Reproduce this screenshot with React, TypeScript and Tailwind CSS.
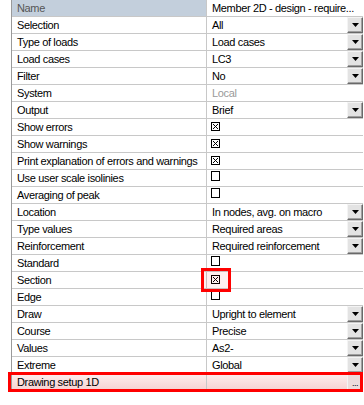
import React from "react";

type Row = {
  name: string;
  value?: string;
  kind: "combo" | "check" | "text" | "dots";
  checked?: boolean;
  muted?: boolean;
};

const rows: Row[] = [
  { name: "Selection", value: "All", kind: "combo" },
  { name: "Type of loads", value: "Load cases", kind: "combo" },
  { name: "Load cases", value: "LC3", kind: "combo" },
  { name: "Filter", value: "No", kind: "combo" },
  { name: "System", value: "Local", kind: "text", muted: true },
  { name: "Output", value: "Brief", kind: "combo" },
  { name: "Show errors", kind: "check", checked: true },
  { name: "Show warnings", kind: "check", checked: true },
  { name: "Print explanation of errors and warnings", kind: "check", checked: true },
  { name: "Use user scale isolinies", kind: "check" },
  { name: "Averaging of peak", kind: "check" },
  { name: "Location", value: "In nodes, avg. on macro", kind: "combo" },
  { name: "Type values", value: "Required areas", kind: "combo" },
  { name: "Reinforcement", value: "Required reinforcement", kind: "combo" },
  { name: "Standard", kind: "check" },
  { name: "Section", kind: "check", checked: true },
  { name: "Edge", kind: "check" },
  { name: "Draw", value: "Upright to element", kind: "combo" },
  { name: "Course", value: "Precise", kind: "combo" },
  { name: "Values", value: "As2-", kind: "combo" },
  { name: "Extreme", value: "Global", kind: "combo" },
  { name: "Drawing setup 1D", kind: "dots" },
];

function ComboButton() {
  return (
    <div className="ml-auto flex h-[16px] w-[16px] shrink-0 items-center justify-center border-t border-l border-t-[#f4f4f4] border-l-[#f4f4f4] border-b border-r border-b-[#696969] border-r-[#696969] bg-[#e3e3e3] shadow-[inset_-1px_-1px_0_#a0a0a0]">
      <svg width="7" height="4" viewBox="0 0 7 4">
        <path d="M0 0h7L3.5 4z" fill="#000" />
      </svg>
    </div>
  );
}

function DotsButton() {
  return (
    <div className="ml-auto flex h-[16px] w-[16px] shrink-0 items-end justify-center border-t border-l border-t-[#f4f4f4] border-l-[#f4f4f4] border-b border-r border-b-[#696969] border-r-[#696969] bg-[#ecdcdc] pb-[2px] text-[9px] leading-[8px] text-black">
      <span className="tracking-[-0.5px]">...</span>
    </div>
  );
}

function Check({ checked }: { checked?: boolean }) {
  if (checked) {
    return (
      <svg width="9" height="9" viewBox="0 0 9 9" className="mt-[3px] ml-[4px]">
        <rect x="0.5" y="0.5" width="8" height="8" fill="#fff" stroke="#000" />
        <path d="M2 2L7 7M7 2L2 7" stroke="#000" strokeWidth="1" />
      </svg>
    );
  }
  return <div className="mt-[1px] ml-[4px] h-[10px] w-[9px] border border-black bg-white" />;
}

export default function App() {
  return (
    <div
      className="relative h-[405px] w-[364px] overflow-hidden bg-white text-[11px] tracking-[-0.35px] text-black"
      style={{ fontFamily: '"Liberation Sans", Arial, sans-serif' }}
    >
      <div className="ml-[11px] w-[352px] border-l border-[#9a9a9a]">
        <div className="flex h-[17px] border-b border-[#c8c8c8]">
          <div className="w-[195px] border-r border-[#c8c8c8] bg-[#c3cfdc] pl-[5px] leading-[16px] text-[#555]">Name</div>
          <div className="flex-1 whitespace-nowrap pl-[5px] leading-[16px]">Member 2D - design - require...</div>
        </div>
        {rows.map((r) => (
          <div
            key={r.name}
            className={
              r.kind === "dots"
                ? "flex h-[17px] border-b border-[#c8c8c8] bg-gradient-to-b from-[#fdeeee] to-[#f6d2d2]"
                : "flex h-[17px] border-b border-[#c8c8c8]"
            }
          >
            <div className="w-[195px] whitespace-nowrap border-r border-[#c8c8c8] pl-[5px] leading-[16px]">{r.name}</div>
            <div className="flex flex-1 items-start">
              {r.kind === "combo" && (
                <>
                  <span className="whitespace-nowrap pl-[5px] leading-[16px]">{r.value}</span>
                  <ComboButton />
                </>
              )}
              {r.kind === "text" && (
                <span className={r.muted ? "pl-[5px] leading-[16px] text-[#9a9a9a]" : "pl-[5px] leading-[16px]"}>
                  {r.value}
                </span>
              )}
              {r.kind === "check" && <Check checked={r.checked} />}
              {r.kind === "dots" && <DotsButton />}
            </div>
          </div>
        ))}
      </div>

      {/* highlight marks */}
      <div className="pointer-events-none absolute left-[201px] top-[268px] h-[24px] w-[30px] border-[3px] border-[#ff0000] bg-[#ff000010]" />
      <div className="pointer-events-none absolute left-[8px] top-[372px] h-[20px] w-[355px] border-[3px] border-[#ff0000]" />
    </div>
  );
}
